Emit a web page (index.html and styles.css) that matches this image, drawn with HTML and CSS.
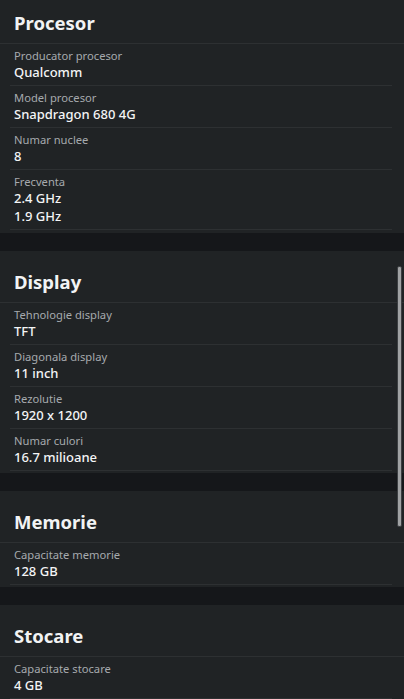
FILE: index.html
```html
<!DOCTYPE html>
<html lang="ro">
<head>
<meta charset="utf-8">
<title>Specificatii</title>
<link rel="stylesheet" href="styles.css">
</head>
<body>
<main class="page">
  <section class="card card-first">
    <h2 class="card-title">Procesor</h2>
    <div class="row"><div class="label">Producator procesor</div><div class="value">Qualcomm</div></div>
    <div class="row"><div class="label">Model procesor</div><div class="value">Snapdragon 680 4G</div></div>
    <div class="row"><div class="label">Numar nuclee</div><div class="value">8</div></div>
    <div class="row"><div class="label">Frecventa</div><div class="value">2.4 GHz</div><div class="value">1.9 GHz</div></div>
  </section>
  <section class="card">
    <h2 class="card-title">Display</h2>
    <div class="row"><div class="label">Tehnologie display</div><div class="value">TFT</div></div>
    <div class="row"><div class="label">Diagonala display</div><div class="value">11 inch</div></div>
    <div class="row"><div class="label">Rezolutie</div><div class="value">1920 x 1200</div></div>
    <div class="row"><div class="label">Numar culori</div><div class="value">16.7 milioane</div></div>
  </section>
  <section class="card">
    <h2 class="card-title">Memorie</h2>
    <div class="row"><div class="label">Capacitate memorie</div><div class="value">128 GB</div></div>
  </section>
  <section class="card">
    <h2 class="card-title">Stocare</h2>
    <div class="row"><div class="label">Capacitate stocare</div><div class="value">4 GB</div></div>
  </section>
</main>
<div class="scrollbar"></div>
</body>
</html>
```
FILE: styles.css
```css
html, body {
  margin: 0;
  padding: 0;
  overflow: hidden;
  background: #15171a;
  font-family: "Noto Sans", "Open Sans", sans-serif;
}
.page {
  display: flex;
  flex-direction: column;
  gap: 18px;
}
.card {
  background: #202325;
  padding-bottom: 2px;
}
.card-first {
  margin-top: -8px;
  padding-bottom: 3px;
}
.card-title {
  margin: 0;
  padding: 17px 14px 6px;
  font-size: 18.5px;
  line-height: 28px;
  font-weight: 700;
  color: #f2f3f4;
  border-bottom: 1px solid #2d3032;
}
.row {
  margin: 0 12px 0 10px;
  padding: 4px 4px 4px;
  border-bottom: 1px solid #2d3032;
}
.label {
  font-size: 11.2px;
  line-height: 15px;
  color: #a6aaae;
}
.value {
  font-size: 13px;
  line-height: 18px;
  font-weight: 500;
  color: #f4f5f6;
}
.scrollbar {
  position: absolute;
  right: 2px;
  top: 266px;
  width: 3px;
  height: 259px;
  background: #a0a2a4;
  border: 1px solid #3c3f42;
  border-radius: 2px;
}
```
